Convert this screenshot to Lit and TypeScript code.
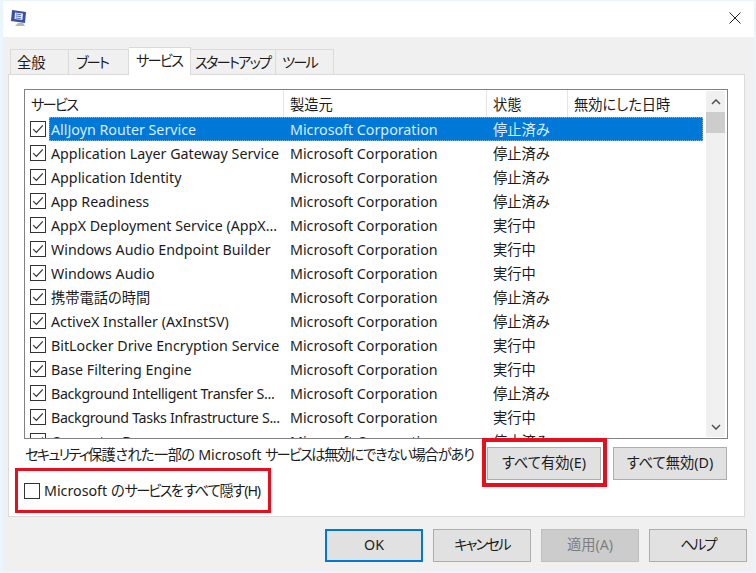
import { LitElement, html, css } from "lit";
import { customElement } from "lit/decorators.js";

const STOP = "停止済み";
const RUN = "実行中";
const rows: [string, string][] = [
  ["AllJoyn Router Service", STOP],
  ["Application Layer Gateway Service", STOP],
  ["Application Identity", STOP],
  ["App Readiness", STOP],
  ["AppX Deployment Service (AppX...", RUN],
  ["Windows Audio Endpoint Builder", RUN],
  ["Windows Audio", RUN],
  ["携帯電話の時間", STOP],
  ["ActiveX Installer (AxInstSV)", STOP],
  ["BitLocker Drive Encryption Service", RUN],
  ["Base Filtering Engine", RUN],
  ["Background Intelligent Transfer S...", STOP],
  ["Background Tasks Infrastructure S...", RUN],
  ["Computer Browser", STOP],
];
const tabs = [
  ["全般", 59, 6],
  ["ブート", 60, 7],
  ["サービス", 62, 7],
  ["スタートアップ", 85, 4],
  ["ツール", 58, 6],
] as const;

/** The reference's UI font sets katakana much narrower than Noto: tighten those runs. */
const jp = (text: string) =>
  text
    .split(/([ァ-ヶー]+)/)
    .map((part, i) => (i % 2 ? html`<span class="kt">${part}</span>` : part));

@customElement("app-root")
export class AppRoot extends LitElement {
  static styles = css`
    :host {
      display: block;
      width: 756px;
      height: 573px;
      overflow: hidden;
      font-family: "Noto Sans", "Noto Sans CJK JP", sans-serif;
      font-size: 14.25px;
      font-feature-settings: "palt";
      color: #1c1c1c;
    }
    .kt {
      letter-spacing: -1.8px;
    }
    .tm {
      letter-spacing: -0.6px;
    }
    .tl {
      letter-spacing: -1.15px;
    }
    .window {
      position: relative;
      width: 756px;
      height: 573px;
      display: flex;
      flex-direction: column;
      background: #f0f0f0;
      box-sizing: border-box;
    }
    .title {
      height: 37px;
      flex: none;
      background: #fff;
      display: flex;
      align-items: flex-start;
      justify-content: space-between;
      padding: 8px 15px 0 10px;
      box-sizing: border-box;
    }
    .close {
      margin-top: 4px;
      display: block;
    }
    .tabstrip {
      display: flex;
      align-items: flex-end;
      height: 37px;
      flex: none;
      padding-left: 10px;
      box-sizing: border-box;
    }
    .tab {
      height: 25px;
      box-sizing: border-box;
      background: #f0f0f0;
      border: 1px solid #dadada;
      border-bottom: none;
      border-left: none;
      display: flex;
      align-items: center;
      line-height: 1;
      white-space: nowrap;
      padding-top: 2px;
    }
    .tab:first-child {
      border-left: 1px solid #dadada;
    }
    .tab.active {
      height: 28px;
      margin-bottom: -1px;
      background: #fff;
      position: relative;
      z-index: 1;
      padding-top: 0;
      padding-bottom: 1px;
    }
    .panel {
      width: 737px;
      height: 443px;
      flex: none;
      margin-left: 8px;
      background: #fff;
      border: 1px solid #dadada;
      box-sizing: border-box;
      padding: 14px 16px 0 15px;
      display: flex;
      flex-direction: column;
    }
    .list {
      height: 350px;
      flex: none;
      border: 1px solid #828282;
      box-sizing: border-box;
      display: flex;
      overflow: hidden;
    }
    .table {
      width: 678px;
      flex: none;
      display: flex;
      flex-direction: column;
    }
    .cols {
      display: grid;
      grid-template-columns: 259px 203px 81px 135px;
    }
    .head {
      height: 27px;
      flex: none;
      align-items: center;
    }
    .head div {
      height: 27px;
      line-height: 29px;
      border-right: 1px solid #e5e5e5;
      padding-left: 6px;
      box-sizing: border-box;
    }
    .head div:last-child {
      border-right: none;
    }
    .row {
      height: 24px;
      flex: none;
      align-items: center;
    }
    .row div {
      white-space: nowrap;
      height: 24px;
      line-height: 26px;
      padding-left: 6px;
      min-width: 0;
    }
    .row .first {
      display: flex;
      align-items: center;
      padding-left: 5px;
      gap: 5px;
    }
    .row .first span {
      margin-top: 2px;
    }
    .row .first span.tight {
      letter-spacing: -0.33px;
    }
    .row.selected {
      background: linear-gradient(#0078d7, #0078d7) no-repeat 24px 0 / 654px 24px;
      position: relative;
    }
    .row.selected div {
      color: #d9edff;
    }
    .row .focus {
      position: absolute;
      left: 24px;
      top: 0;
      width: 654px;
      height: 24px;
      box-sizing: border-box;
      border: 1px dotted #7fb4e0;
      padding: 0;
    }
    .cb {
      width: 16px;
      height: 16px;
      flex: none;
      display: block;
    }
    .scroll {
      width: 19px;
      margin: 1px 0 1px 3px;
      flex: none;
      background: #f0f0f0;
      display: flex;
      flex-direction: column;
      align-items: stretch;
    }
    .arrow {
      height: 21px;
      flex: none;
      display: flex;
      align-items: center;
      justify-content: center;
    }
    .thumb {
      height: 21px;
      flex: none;
      background: #cdcdcd;
    }
    .track {
      flex: 1;
    }
    .below {
      display: flex;
      justify-content: space-between;
      align-items: flex-start;
      padding: 0 1px;
    }
    .hint {
      flex: 1;
      min-width: 0;
      line-height: 20px;
      padding-top: 6px;
      white-space: nowrap;
    }
    .btns {
      display: flex;
      flex: none;
      gap: 12px;
      padding-top: 8px;
    }
    .btn {
      width: 114px;
      height: 33px;
      flex: none;
      box-sizing: border-box;
      background: #e1e1e1;
      border: 1px solid #adadad;
      display: flex;
      align-items: center;
      justify-content: center;
      white-space: nowrap;
      line-height: 1;
    }
    .hide {
      display: flex;
      align-items: center;
      gap: 4px;
      white-space: nowrap;
      margin-top: 3px;
      line-height: 16px;
    }
    .box {
      width: 16px;
      height: 16px;
      box-sizing: border-box;
      border: 1px solid #333;
      background: #fff;
      flex: none;
    }
    .footer {
      display: flex;
      justify-content: flex-end;
      gap: 10px;
      padding: 12px 9px 0 0;
    }
    .footer .btn {
      width: 98px;
    }
    .btn.ok {
      border: 2px solid #0078d7;
    }
    .btn.disabled {
      background: #cccccc;
      color: #7f7f7f;
      border-color: #bfbfbf;
    }
    .mark {
      position: absolute;
      box-sizing: border-box;
      border-style: solid;
      border-color: #e60f1e;
      pointer-events: none;
    }
    .mark.a {
      left: 482px;
      top: 438px;
      width: 125px;
      height: 49px;
      border-width: 4px;
    }
    .mark.b {
      left: 15px;
      top: 468px;
      width: 256px;
      height: 45px;
      border-width: 3px;
    }
    .edge {
      position: absolute;
      inset: 0;
      box-sizing: border-box;
      border-style: solid;
      border-color: #e9f6fd;
      border-width: 1px 2px 2px 3px;
      pointer-events: none;
    }
  `;

  private check() {
    return html`<svg class="cb" viewBox="0 0 16 16">
      <rect x="0.5" y="0.5" width="15" height="15" fill="#fff" stroke="#333" />
      <path d="M3.2 8.2 L6.4 11.4 L12.8 4.4" fill="none" stroke="#333" stroke-width="1.2" />
    </svg>`;
  }

  render() {
    return html`<div class="window">
      <div class="title">
        <svg width="19" height="20" viewBox="0 0 19 20">
          <path d="M8 15 L13 15 L15 18 L5 18 Z" fill="#b4b6bd" />
          <path d="M2 2 L16 4 L15 15 L1 13 Z" fill="#3a4ea6" />
          <path d="M5 4.5 L13 5.5 L12.4 12 L4.5 11 Z" fill="#e6ecf8" />
          <path d="M6 6 L11 6.6 M6 8 L11 8.6 M5.8 10 L10.8 10.6" stroke="#5870b8" stroke-width="1" />
        </svg>
        <svg class="close" width="12" height="12" viewBox="0 0 12 12">
          <path d="M0.5 0.5 L11.5 11.5 M11.5 0.5 L0.5 11.5" stroke="#222" stroke-width="1" fill="none" />
        </svg>
      </div>
      <div class="tabstrip">
        ${tabs.map(
          ([t, w, p]) =>
            html`<div class="tab ${t === "サービス" ? "active" : ""}" style="width:${w}px;padding-left:${p}px"><span>${jp(t)}</span></div>`
        )}
      </div>
      <div class="panel">
        <div class="list">
          <div class="table">
            <div class="cols head">
              <div>${jp("サービス")}</div>
              <div>製造元</div>
              <div>状態</div>
              <div>無効にした日時</div>
            </div>
            ${rows.map(
              ([n, s], i) => html`<div class="cols row ${i === 0 ? "selected" : ""}">
                <div class="first">${this.check()}<span class=${n.startsWith("Background ") ? "tight" : ""}>${n}</span></div>
                <div>Microsoft Corporation</div>
                <div>${s}</div>
                <div></div>
                ${i === 0 ? html`<div class="focus"></div>` : ""}
              </div>`
            )}
          </div>
          <div class="scroll">
            <div class="arrow">
              <svg width="10" height="6" viewBox="0 0 10 6"><path d="M1 5 L5 1 L9 5" fill="none" stroke="#555" stroke-width="1.6" /></svg>
            </div>
            <div class="thumb"></div>
            <div class="track"></div>
            <div class="arrow">
              <svg width="10" height="6" viewBox="0 0 10 6"><path d="M1 1 L5 5 L9 1" fill="none" stroke="#555" stroke-width="1.6" /></svg>
            </div>
          </div>
        </div>
        <div class="below">
          <div class="hint">${jp("セキュリティ")}<span class="tm">保護された一部の</span> Microsoft ${jp("サービス")}<span class="tl">は無効にできない場合があり</span></div>
          <div class="btns">
            <div class="btn">すべて有効(E)</div>
            <div class="btn">すべて無効(D)</div>
          </div>
        </div>
        <div class="hide"><div class="box"></div><span>Microsoft の${jp("サービス")}を<span class="tl">すべて隠す(H)</span></span></div>
      </div>
      <div class="footer">
        <div class="btn ok">OK</div>
        <div class="btn"><span>${jp("キャンセル")}</span></div>
        <div class="btn disabled">適用(A)</div>
        <div class="btn"><span>${jp("ヘルプ")}</span></div>
      </div>
      <div class="mark a"></div>
      <div class="mark b"></div>
      <div class="edge"></div>
    </div>`;
  }
}
